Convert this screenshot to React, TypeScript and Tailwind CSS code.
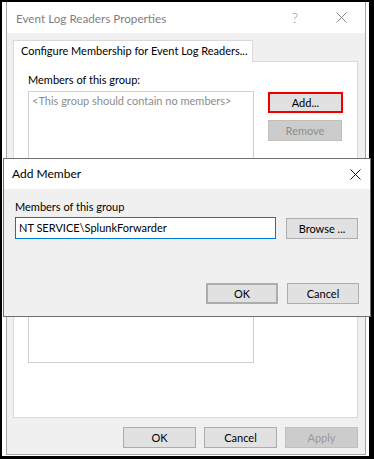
import React from "react";

const btn =
    "flex items-center justify-center bg-[#e1e1e1] border border-[#adadad] text-[11px] text-black";
const disabledBtn =
    "flex items-center justify-center bg-[#cccccc] border border-[#bfbfbf] text-[11px] text-[#8d8d8d]";

function CloseIcon({ color }: { color: string }) {
    return (
        <svg width="11" height="11" viewBox="0 0 11 11">
            <path d="M0.5 0.5 L10.5 10.5 M10.5 0.5 L0.5 10.5" stroke={color} strokeWidth="1" fill="none" />
        </svg>
    );
}

export default function App() {
    return (
        <div className="relative w-[374px] h-[459px] bg-black pt-[2px] pl-[2px] pr-[5px] pb-[3px] font-['Lato',sans-serif] leading-[16px] whitespace-nowrap">
            <div className="h-full bg-white pl-[4px] pr-[3px]">
                {/* properties window */}
                <div className="h-[453px] flex flex-col border-x border-b border-[#a6a6a6]">
                    <div className="h-[31px] shrink-0 flex items-center pl-[9px] bg-white text-[11.7px] text-[#7f7f7f]">
                        <span>Event Log Readers Properties</span>
                        <span className="ml-auto mr-[38px] text-[14px] font-light text-[#8a8a8a]">?</span>
                        <span className="mr-[18px] flex">
                            <CloseIcon color="#8a8a8a" />
                        </span>
                    </div>

                    <div className="flex-1 flex flex-col bg-[#f0f0f0] pt-[7px] pl-[6px] pr-[7px]">
                        <div className="relative z-10 -mb-px w-[240px] h-[22px] border border-b-0 border-[#d9d9d9] bg-white pl-[7px] pt-[2px] text-[11px] text-black">
                            Configure Membership for Event Log Readers...
                        </div>
                        <div className="h-[357px] border border-[#d9d9d9] bg-white px-[14px] pt-[10px]">
                            <div className="text-[11px] text-black">Members of this group:</div>
                            <div className="mt-[3px] flex">
                                <div className="w-[227px] h-[272px] border border-[#cfcfcf] pl-[3px] pt-[1px] text-[11px] text-[#8c8c8c]">
                                    &lt;This group should contain no members&gt;
                                </div>
                                <div className="ml-[14px] flex flex-col">
                                    <div className={btn + " mt-px w-[75px] h-[21px] border-2 border-[#ee0000]"}>Add...</div>
                                    <div className={disabledBtn + " mt-[7px] w-[74px] h-[21px]"}>Remove</div>
                                </div>
                            </div>
                        </div>
                        <div className="mt-[9px] flex justify-end gap-[8px]">
                            <div className={btn + " w-[73px] h-[21px]"}>OK</div>
                            <div className={btn + " w-[73px] h-[21px]"}>Cancel</div>
                            <div className={disabledBtn + " w-[73px] h-[21px] text-[#9a9a9a]"}>Apply</div>
                        </div>
                    </div>
                </div>
            </div>

            {/* Add Member dialog on top */}
            <div className="absolute left-[3px] top-[158px] w-[368px] h-[159px] flex flex-col border border-[#6f6f6f] bg-[#f0f0f0]">
                <div className="h-[30px] shrink-0 flex items-center pl-[8px] bg-white text-[12px] text-black">
                    <span>Add Member</span>
                    <span className="ml-auto mr-[9px] flex">
                        <CloseIcon color="#1a1a1a" />
                    </span>
                </div>
                <div className="flex-1 px-[11px] pt-[10px]">
                    <div className="text-[11px] text-black">Members of this group</div>
                    <div className="mt-[2px] flex">
                        <div className="w-[261px] h-[22px] border border-[#0078d7] bg-white pl-[3px] pt-[2px] text-[11px] text-black">
                            NT SERVICE\SplunkForwarder
                        </div>
                        <div className={btn + " ml-[10px] mt-px w-[72px] h-[21px]"}>Browse ...</div>
                    </div>
                    <div className="mt-[44px] flex justify-end gap-[9px]">
                        <div className={btn + " w-[72px] h-[21px] border-2 border-[#0078d7]"}>OK</div>
                        <div className={btn + " w-[72px] h-[21px]"}>Cancel</div>
                    </div>
                </div>
            </div>
        </div>
    );
}
